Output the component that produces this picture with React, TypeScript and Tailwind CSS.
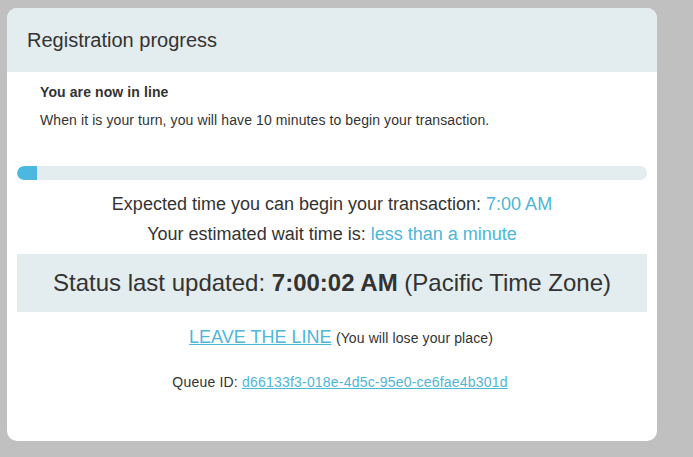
export default function App() {
  return (
    <div
      className="w-[693px] h-[457px] bg-[#c0c0c0] pt-[8px] pl-[7px] overflow-hidden text-[#333]"
      style={{ fontFamily: '"Liberation Sans", Arial, sans-serif' }}
    >
      <div className="w-[650px] h-[433px] bg-white rounded-[10px] overflow-hidden">
        <div className="h-[64px] bg-[#e3ecee] flex items-center pl-[20px]">
          <h1 className="text-[20px] text-[#333]">Registration progress</h1>
        </div>

        <div className="px-[33px] pt-[10px] tracking-[0.1px]">
          <p className="text-[14px] leading-[20px] font-bold">You are now in line</p>
          <p className="text-[14px] leading-[20px] mt-[8px]">When it is your turn, you will have 10 minutes to begin your transaction.</p>
        </div>

        <div className="mx-[10px] mt-[36px] h-[14px] rounded-full bg-[#e3ecee] overflow-hidden">
          <div className="h-full w-[20px] bg-[#4bb8e0] rounded-l-full" />
        </div>

        <p className="text-center text-[18px] mt-[13px] leading-[22px]">
          Expected time you can begin your transaction: <span className="text-[#4db6d8]">7:00 AM</span>
        </p>
        <p className="text-center text-[18px] mt-[8px] leading-[22px]">
          Your estimated wait time is: <span className="text-[#4db6d8]">less than a minute</span>
        </p>

        <div className="mx-[10px] mt-[9px] h-[58px] bg-[#e3ecee] flex items-center justify-center text-[24px]">
          <span>
            Status last updated: <b>7:00:02 AM</b> (Pacific Time Zone)
          </span>
        </div>

        <p className="text-center mt-[14px] leading-[22px] pl-[18px]">
          <a href="#" className="text-[18px] text-[#4db6d8] underline">LEAVE THE LINE</a>{" "}
          <span className="text-[14px] tracking-[0.1px]">(You will lose your place)</span>
        </p>

        <p className="text-center text-[14px] leading-[20px] mt-[23px] tracking-[0.2px] pl-[16px]">
          Queue ID: <a href="#" className="text-[#4db6d8] underline">d66133f3-018e-4d5c-95e0-ce6fae4b301d</a>
        </p>
      </div>
    </div>
  );
}
